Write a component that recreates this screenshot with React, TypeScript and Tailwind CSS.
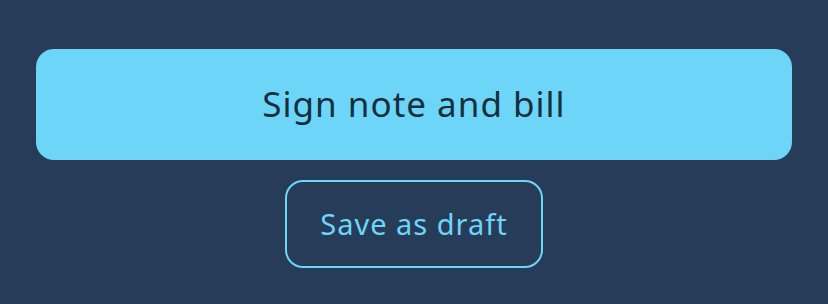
export default function App() {
  return (
    <div className="min-h-[304px] w-full bg-[#273c58] px-[36px] pt-[49px] pb-[36px] flex flex-col items-center gap-[20px]" style={{ fontFamily: '"Noto Sans", Lato, sans-serif' }}>
      <button className="w-full h-[111px] rounded-[18px] bg-[#6dd5f8] text-[#15303c] text-[35px] font-normal tracking-[1px] flex items-center justify-center">
        Sign note and bill
      </button>
      <button className="w-[258px] h-[88px] rounded-[18px] border-2 border-[#6dd5f8] text-[#6dd5f8] text-[29px] font-normal tracking-[1px] flex items-center justify-center">
        Save as draft
      </button>
    </div>
  )
}
